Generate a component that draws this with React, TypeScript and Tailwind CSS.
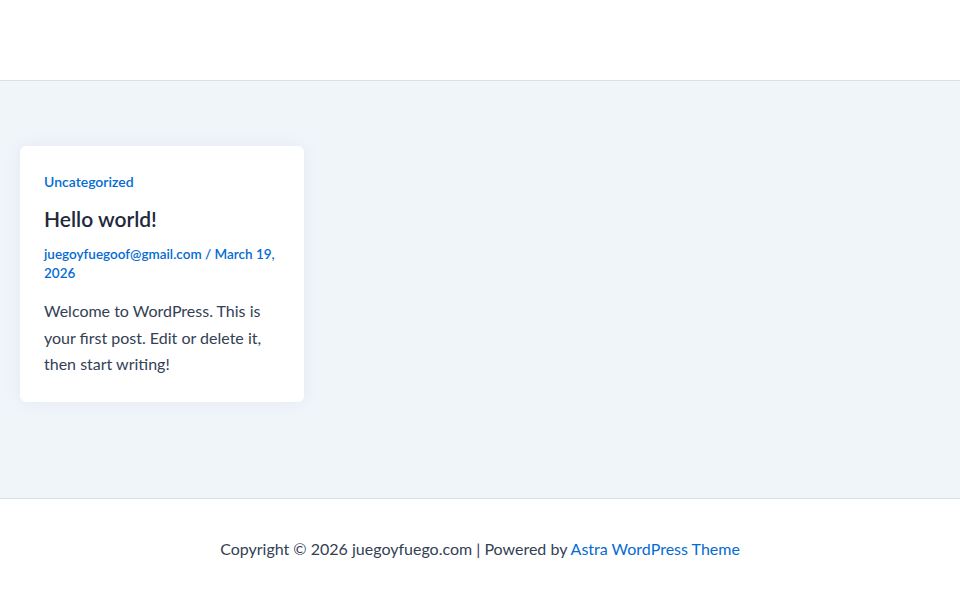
import React from "react";

export default function App() {
  return (
    <div className="min-h-[600px] w-full bg-white flex flex-col" style={{ fontFamily: "Lato, 'Noto Sans', sans-serif" }}>
      <header className="h-[81px] bg-white border-b border-[#dcdfe3]" />
      <main className="h-[418px] bg-[#f0f5fa] border-b border-[#dcdfe3] px-[20px] pt-[65px]">
        <article className="w-[284px] h-[256px] bg-white rounded-[6px] shadow-[0_0_16px_rgba(140,160,190,0.12)] px-[24px] pt-[27px]">
          <div className="text-[14px] font-semibold text-[#046bd2] leading-[18px]">Uncategorized</div>
          <h2 className="mt-[15px] text-[21px] font-semibold text-[#1e293b] leading-[26px]">Hello world!</h2>
          <div className="mt-[13px] text-[13.5px] font-semibold text-[#046bd2] leading-[19px]">
            juegoyfuegoof@gmail.com / March 19, 2026
          </div>
          <p className="mt-[15px] text-[16px] text-[#334155] leading-[26.5px]">
            Welcome to WordPress. This is your first post. Edit or delete it, then start writing!
          </p>
        </article>
      </main>
      <footer className="h-[101px] bg-white flex items-center justify-center pb-[2px]">
        <p className="text-[16px] text-[#334155] leading-[24px]">
          Copyright © 2026 juegoyfuego.com | Powered by <span className="text-[#046bd2]">Astra WordPress Theme</span>
        </p>
      </footer>
    </div>
  );
}
